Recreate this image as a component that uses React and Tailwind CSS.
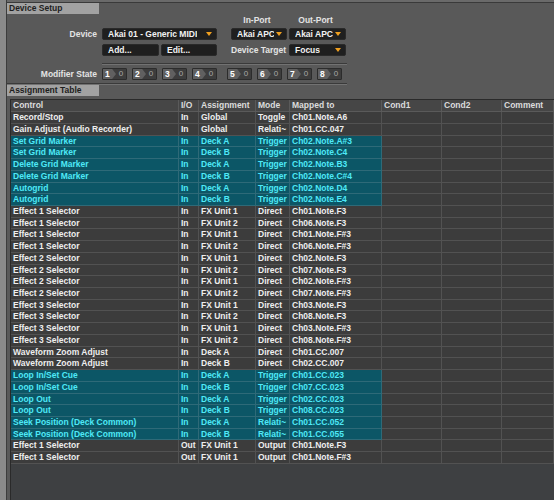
import React from 'react';

const rows = [
  ['Record/Stop', 'In', 'Global', 'Toggle', 'Ch01.Note.A6', false],
  ['Gain Adjust (Audio Recorder)', 'In', 'Global', 'Relati~', 'Ch01.CC.047', false],
  ['Set Grid Marker', 'In', 'Deck A', 'Trigger', 'Ch02.Note.A#3', true],
  ['Set Grid Marker', 'In', 'Deck B', 'Trigger', 'Ch02.Note.C4', true],
  ['Delete Grid Marker', 'In', 'Deck A', 'Trigger', 'Ch02.Note.B3', true],
  ['Delete Grid Marker', 'In', 'Deck B', 'Trigger', 'Ch02.Note.C#4', true],
  ['Autogrid', 'In', 'Deck A', 'Trigger', 'Ch02.Note.D4', true],
  ['Autogrid', 'In', 'Deck B', 'Trigger', 'Ch02.Note.E4', true],
  ['Effect 1 Selector', 'In', 'FX Unit 1', 'Direct', 'Ch01.Note.F3', false],
  ['Effect 1 Selector', 'In', 'FX Unit 2', 'Direct', 'Ch06.Note.F3', false],
  ['Effect 1 Selector', 'In', 'FX Unit 1', 'Direct', 'Ch01.Note.F#3', false],
  ['Effect 1 Selector', 'In', 'FX Unit 2', 'Direct', 'Ch06.Note.F#3', false],
  ['Effect 2 Selector', 'In', 'FX Unit 1', 'Direct', 'Ch02.Note.F3', false],
  ['Effect 2 Selector', 'In', 'FX Unit 2', 'Direct', 'Ch07.Note.F3', false],
  ['Effect 2 Selector', 'In', 'FX Unit 1', 'Direct', 'Ch02.Note.F#3', false],
  ['Effect 2 Selector', 'In', 'FX Unit 2', 'Direct', 'Ch07.Note.F#3', false],
  ['Effect 3 Selector', 'In', 'FX Unit 1', 'Direct', 'Ch03.Note.F3', false],
  ['Effect 3 Selector', 'In', 'FX Unit 2', 'Direct', 'Ch08.Note.F3', false],
  ['Effect 3 Selector', 'In', 'FX Unit 1', 'Direct', 'Ch03.Note.F#3', false],
  ['Effect 3 Selector', 'In', 'FX Unit 2', 'Direct', 'Ch08.Note.F#3', false],
  ['Waveform Zoom Adjust', 'In', 'Deck A', 'Direct', 'Ch01.CC.007', false],
  ['Waveform Zoom Adjust', 'In', 'Deck B', 'Direct', 'Ch02.CC.007', false],
  ['Loop In/Set Cue', 'In', 'Deck A', 'Trigger', 'Ch01.CC.023', true],
  ['Loop In/Set Cue', 'In', 'Deck B', 'Trigger', 'Ch07.CC.023', true],
  ['Loop Out', 'In', 'Deck A', 'Trigger', 'Ch02.CC.023', true],
  ['Loop Out', 'In', 'Deck B', 'Trigger', 'Ch08.CC.023', true],
  ['Seek Position (Deck Common)', 'In', 'Deck A', 'Relati~', 'Ch01.CC.052', true],
  ['Seek Position (Deck Common)', 'In', 'Deck B', 'Relati~', 'Ch01.CC.055', true],
  ['Effect 1 Selector', 'Out', 'FX Unit 1', 'Output', 'Ch01.Note.F3', false],
  ['Effect 1 Selector', 'Out', 'FX Unit 1', 'Output', 'Ch01.Note.F#3', false],
];

const headers = ['Control', 'I/O', 'Assignment', 'Mode', 'Mapped to', 'Cond1', 'Cond2', 'Comment'];

const SectionTitle = ({ children }) => (
  <div className="flex h-[11px]">
    <div className="w-[92px] bg-[#a2a2a2] pl-[2px] text-[8.5px] font-bold leading-[11px] text-[#1e1e1e]">
      {children}
    </div>
  </div>
);

const Dropdown = ({ label, width }) => (
  <div
    className={`flex h-[12px] items-center justify-between rounded-[2px] border border-[#2a2a2a] bg-[#1f1f1f] pl-[5px] pr-[4px] ${width}`}
  >
    <span className="overflow-hidden whitespace-nowrap text-[8.5px] font-bold leading-[10px] text-[#f2f2f2]">{label}</span>
    <svg width="6" height="4" viewBox="0 0 6 4" className="ml-[2px] shrink-0">
      <polygon points="0,0 6,0 3,4" fill="#f0a020" />
    </svg>
  </div>
);

const Button = ({ label, width }) => (
  <div
    className={`flex h-[12px] items-center rounded-[2px] border border-[#2a2a2a] bg-[#1f1f1f] pl-[5px] text-[8.5px] font-bold leading-[10px] text-[#f2f2f2] ${width}`}
  >
    {label}
  </div>
);

const Modifier = ({ n }) => (
  <div className="flex h-[12px] w-[25px] overflow-hidden rounded-[1px] border border-[#2c2c2c] bg-[#3d3d3d]">
    <div className="flex w-[13px] items-center bg-[#606060] pl-[2px] text-[8.5px] font-bold leading-[10px] text-white [clip-path:polygon(0_0,70%_0,100%_50%,70%_100%,0_100%)]">
      {n}
    </div>
    <div className="flex flex-1 items-center justify-center text-[8px] leading-[10px] text-[#a8a8a8]">0</div>
  </div>
);

const Separator = () => (
  <div className="ml-[95px] w-[245px] border-t border-b border-t-[#3a3a3a] border-b-[#727272]" />
);

const AssignmentRow = ({ row }) => {
  const [control, io, assignment, mode, mapped, active] = row;
  const cells = [control, io, assignment, mode, mapped, '', '', ''];
  return (
    <div className="grid h-[11.72px] grid-cols-[168px_20px_57px_34px_92px_60px_60px_1fr]">
      {cells.map((text, i) => {
        const lit = active && i < 5;
        return (
          <div
            key={i}
            className={`overflow-hidden whitespace-nowrap border-b border-r pl-[2px] text-[8.5px] font-bold leading-[10.7px] ${
              lit
                ? 'border-[#2e6a78] bg-[#0c5666] text-[#4ee9f7]'
                : 'border-[#525252] bg-[#3c3c3c] text-[#eeeeee]'
            }`}
          >
            {text}
          </div>
        );
      })}
    </div>
  );
};

export default function App() {
  return (
    <div className="flex h-[500px] w-[554px] overflow-hidden bg-[#595959] font-['Liberation_Sans',Arial,sans-serif]">
      <div className="w-[7px] shrink-0 border-r border-[#3c3c3c] bg-[#8a8a8a]" />
      <div className="flex min-w-0 flex-1 flex-col">
        <div className="h-[3px] border-b border-[#3a3a3a] bg-[#6a6a6a]" />
        <SectionTitle>Device Setup</SectionTitle>

        <div className="flex h-[13px] items-center text-[8.5px] font-bold text-[#e4e4e4]">
          <div className="ml-[222px] w-[56px] text-center">In-Port</div>
          <div className="ml-[2px] w-[57px] text-center">Out-Port</div>
        </div>

        <div className="mt-[1px] flex items-center">
          <div className="w-[90px] text-right text-[8.5px] font-bold text-[#e4e4e4]">Device</div>
          <div className="ml-[5px] flex gap-[2px]">
            <Dropdown label="Akai 01 - Generic MIDI" width="w-[115px]" />
            <div className="w-[10px]" />
            <Dropdown label="Akai APC40" width="w-[56px]" />
            <Dropdown label="Akai APC40" width="w-[57px]" />
          </div>
        </div>

        <div className="mt-[3px] flex items-center">
          <div className="w-[95px]" />
          <div className="flex items-center gap-[2px]">
            <Button label="Add..." width="w-[57px]" />
            <Button label="Edit..." width="w-[56px]" />
            <div className="w-[10px]" />
            <div className="w-[56px] whitespace-nowrap text-[8.5px] font-bold text-[#e4e4e4]">Device Target</div>
            <Dropdown label="Focus" width="w-[57px]" />
          </div>
        </div>

        <div className="mt-[6px]">
          <Separator />
        </div>

        <div className="mt-[3px] flex items-center">
          <div className="w-[90px] text-right text-[8.5px] font-bold text-[#e4e4e4]">Modifier State</div>
          <div className="ml-[5px] flex gap-[5px]">
            <Modifier n="1" />
            <Modifier n="2" />
            <Modifier n="3" />
            <Modifier n="4" />
          </div>
          <div className="ml-[10px] flex gap-[5px]">
            <Modifier n="5" />
            <Modifier n="6" />
            <Modifier n="7" />
            <Modifier n="8" />
          </div>
        </div>

        <div className="mt-[3px] w-[340px] border-t border-b border-t-[#3a3a3a] border-b-[#727272]" />
        <SectionTitle>Assignment Table</SectionTitle>

        <div className="ml-[3px] mt-[3px] flex-1 border-l border-t border-[#2a2a2a] bg-[#3e4042]">
          <div className="grid h-[12px] grid-cols-[168px_20px_57px_34px_92px_60px_60px_1fr] bg-[#464646]">
            {headers.map((h) => (
              <div
                key={h}
                className="overflow-hidden whitespace-nowrap border-b border-r border-[#5a5a5a] pl-[2px] text-[8.5px] font-bold leading-[11px] text-[#dcdcdc]"
              >
                {h}
              </div>
            ))}
          </div>
          {rows.map((row, i) => (
            <AssignmentRow key={i} row={row} />
          ))}
        </div>
      </div>
    </div>
  );
}
